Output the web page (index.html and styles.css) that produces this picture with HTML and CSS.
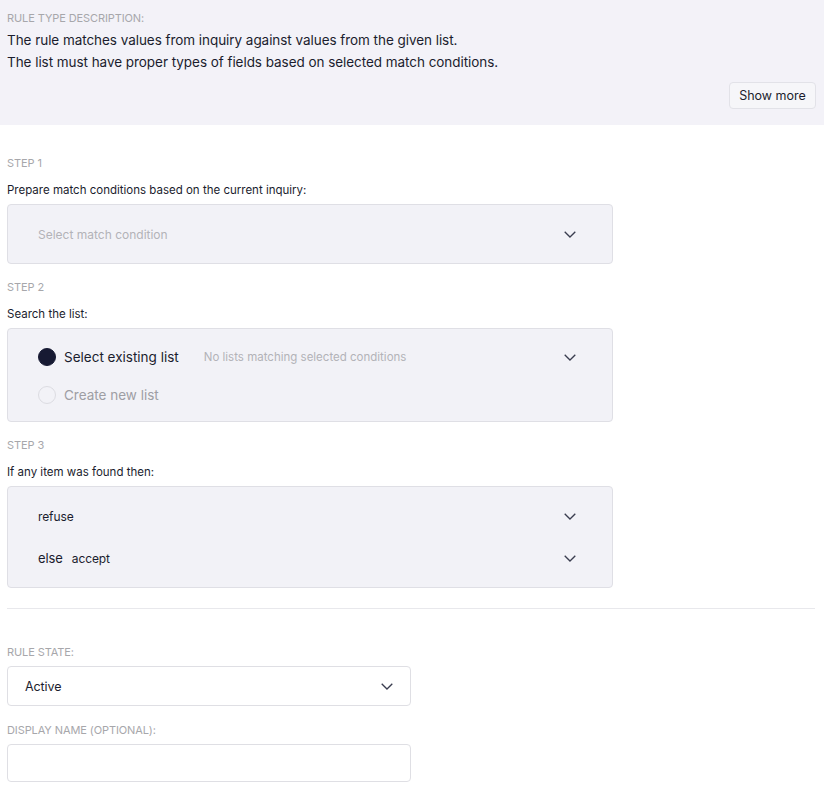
FILE: index.html
```html
<!DOCTYPE html>
<html>
<head>
<meta charset="utf-8">
<link rel="stylesheet" href="styles.css">
</head>
<body>
<div class="desc">
  <div class="label">RULE TYPE DESCRIPTION:</div>
  <p class="desc-text">The rule matches values from inquiry against values from the given list.</p>
  <p class="desc-text">The list must have proper types of fields based on selected match conditions.</p>
  <div class="desc-actions"><button class="btn">Show more</button></div>
</div>
<div class="content">
  <div class="step">
    <div class="label">STEP 1</div>
    <div class="step-title">Prepare match conditions based on the current inquiry:</div>
    <div class="box box-step1">
      <div class="row">
        <span class="placeholder">Select match condition</span>
        <svg class="chev" width="12" height="7" viewBox="0 0 12 7"><path d="M0.7 0.7l5.3 5.3 5.3-5.3" fill="none" stroke="#3a3d4f" stroke-width="1.3"/></svg>
      </div>
    </div>
  </div>
  <div class="step">
    <div class="label">STEP 2</div>
    <div class="step-title">Search the list:</div>
    <div class="box box-step2">
      <div class="row radio-row">
        <span class="radio on"></span>
        <span class="radio-label">Select existing list</span>
        <span class="hint">No lists matching selected conditions</span>
        <svg class="chev" width="12" height="7" viewBox="0 0 12 7"><path d="M0.7 0.7l5.3 5.3 5.3-5.3" fill="none" stroke="#3a3d4f" stroke-width="1.3"/></svg>
      </div>
      <div class="row radio-row">
        <span class="radio"></span>
        <span class="radio-label off">Create new list</span>
      </div>
    </div>
  </div>
  <div class="step">
    <div class="label">STEP 3</div>
    <div class="step-title">If any item was found then:</div>
    <div class="box box-step3">
      <div class="row">
        <span class="value">refuse</span>
        <svg class="chev" width="12" height="7" viewBox="0 0 12 7"><path d="M0.7 0.7l5.3 5.3 5.3-5.3" fill="none" stroke="#3a3d4f" stroke-width="1.3"/></svg>
      </div>
      <div class="row">
        <span class="else">else</span>
        <span class="value">accept</span>
        <svg class="chev" width="12" height="7" viewBox="0 0 12 7"><path d="M0.7 0.7l5.3 5.3 5.3-5.3" fill="none" stroke="#3a3d4f" stroke-width="1.3"/></svg>
      </div>
    </div>
  </div>
  <hr class="divider">
  <div class="field field-state">
    <div class="label">RULE STATE:</div>
    <div class="select">
      <span class="value">Active</span>
      <svg class="chev" width="12" height="7" viewBox="0 0 12 7"><path d="M0.7 0.7l5.3 5.3 5.3-5.3" fill="none" stroke="#3a3d4f" stroke-width="1.3"/></svg>
    </div>
  </div>
  <div class="field">
    <div class="label">DISPLAY NAME (OPTIONAL):</div>
    <div class="input"></div>
  </div>
</div>
</body>
</html>
```

FILE: styles.css
```css
* { box-sizing: border-box; }
body {
  margin: 0;
  font-family: "Inter", "Lato", sans-serif;
  color: #1b1d2e;
  background: #fff;
  width: 824px;
}
.desc {
  background: #f3f2f8;
  padding: 11px 8px 15px 7px;
  height: 125px;
}
.label {
  font-size: 11px;
  color: #a7a7ab;
  letter-spacing: -0.1px;
  line-height: 14px;
}
.desc-text {
  margin: 0;
  font-size: 13.5px;
  line-height: 22px;
  letter-spacing: -0.05px;
  color: #1b1d2e;
}
.desc .label { margin-bottom: 4px; }
.desc-actions {
  display: flex;
  justify-content: flex-end;
  margin-top: 9px;
}
.btn {
  font-family: inherit;
  font-size: 12.5px;
  color: #1b1d2e;
  background: #f6f6f9;
  border: 1px solid #e2e2e8;
  border-radius: 4px;
  height: 27px;
  width: 87px;
  padding: 0;
}
.content {
  padding: 31px 9px 0 7px;
}
.step { width: 606px; margin-bottom: 16px; }
.step .label { margin-bottom: 13px; }
.step-title {
  font-size: 11.5px;
  line-height: 14px;
  letter-spacing: 0;
  margin-bottom: 7px;
}
.box {
  background: #f2f2f7;
  border: 1px solid #dfdfe5;
  border-radius: 4px;
  padding: 0 36px 0 30px;
}
.row {
  display: flex;
  align-items: center;
}
.box-step1 .row { height: 58px; }
.box-step2 { padding-top: 9px; padding-bottom: 7px; }
.box-step2 .row { height: 38px; }
.box-step3 { padding-top: 8px; padding-bottom: 8px; }
.box-step3 .row { height: 42px; }
.chev { margin-left: auto; flex: none; }
.placeholder {
  font-size: 12px;
  color: #b3b3b8;
  letter-spacing: 0;
}
.radio {
  width: 18px;
  height: 18px;
  border-radius: 50%;
  border: 1px solid #dcdce2;
  flex: none;
  margin-right: 8px;
}
.radio.on { background: #171a33; border-color: #171a33; }
.radio-label {
  font-size: 13.5px;
  letter-spacing: 0;
  color: #1b1d2e;
}
.radio-label.off { color: #9e9ea4; }
.hint {
  font-size: 11.5px;
  color: #b3b3b8;
  margin-left: 25px;
  letter-spacing: 0;
}
.value {
  font-size: 12px;
  letter-spacing: -0.1px;
  color: #1b1d2e;
}
.else {
  font-size: 13px;
  margin-right: 9px;
  letter-spacing: -0.1px;
}
.divider {
  border: 0;
  border-top: 1px solid #e8e8ec;
  margin: 20px 0 0 0;
  width: 808px;
}
.field { width: 404px; }
.field-state { margin-top: 36px; margin-bottom: 17px; }
.field .label { margin-bottom: 7px; }
.select {
  height: 40px;
  border: 1px solid #dfdfe4;
  border-radius: 4px;
  display: flex;
  align-items: center;
  padding: 0 17px 0 17px;
  background: #fff;
}
.select .value { font-size: 12.5px; }
.input {
  height: 38px;
  border: 1px solid #dfdfe4;
  border-radius: 4px;
  background: #fff;
}
```
